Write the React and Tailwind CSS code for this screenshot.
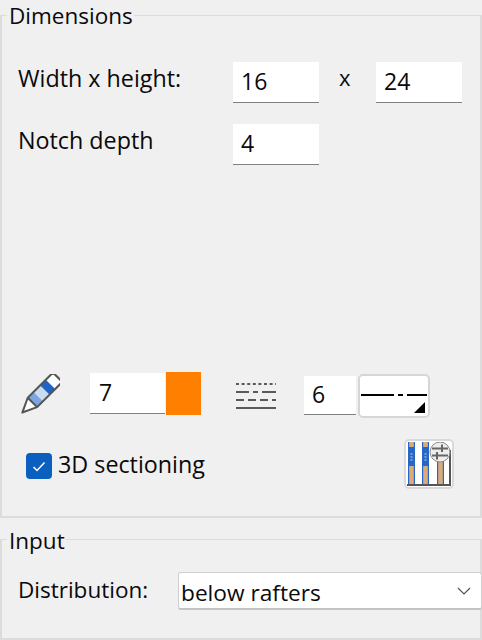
function Field({ value, className = "h-[41px]" }) {
  return (
    <div className={`bg-white border-b-[1.5px] border-[#808080] flex items-center ${className}`}>
      <span className="leading-none -mt-[2px] text-[23px]">{value}</span>
    </div>
  );
}

function Pencil() {
  return (
    <svg width="42" height="42" viewBox="0 0 42 42" fill="none">
      <g transform="translate(1 0) rotate(45 21 21) scale(1.02)">
        <rect x="14" y="-3" width="13" height="9" fill="#ffffff" />
        <rect x="14" y="6" width="13" height="8" fill="#1f63c8" />
        <rect x="14" y="14" width="13" height="9" fill="#c9dcf3" />
        <rect x="14" y="23" width="13" height="8" fill="#7ba6e0" />
        <path d="M14 31 L20.5 44 L27 31 Z" fill="#ffffff" />
        <path d="M14 -1 Q14 -4 17 -4 L24 -4 Q27 -4 27 -1 L27 31 L20.5 45 L14 31 Z M14 31 L27 31" stroke="#555555" strokeWidth="2" strokeLinejoin="round" />
      </g>
    </svg>
  );
}

function LineTypes() {
  return (
    <svg width="40" height="28" viewBox="0 0 40 28" fill="none" stroke="#5a5a5a" strokeWidth="2">
      <line x1="0" x2="40" y1="2" y2="2" strokeDasharray="3 2.6" />
      <path d="M0 10H13M17 10H22M26 10H40" />
      <line x1="0" x2="40" y1="18" y2="18" strokeDasharray="8 4" />
      <line x1="0" x2="40" y1="26" y2="26" />
    </svg>
  );
}

function RaftersIcon() {
  return (
    <svg width="44" height="44" viewBox="0 0 44 44" fill="none">
      {[1, 15, 30].map((x) => (
        <g key={x}>
          <rect x={x} y="0" width="7" height="42" fill="#2467c9" />
          <rect x={x + 1.2} y="0" width="4.6" height="42" fill="#dcab7a" />
        </g>
      ))}
      <rect x="1" y="5" width="7" height="19" fill="#2467c9" />
      <rect x="15" y="5" width="7" height="19" fill="#2467c9" />
      <path d="M3.5 12h2M3.5 15h2M3.5 18h2M17.5 12h2M17.5 15h2M17.5 18h2" stroke="#a9a9b5" strokeWidth="1.5" />
      <path d="M0 43H43V8" stroke="#555555" strokeWidth="2" />
      <circle cx="33" cy="10" r="10" fill="#ededed" stroke="#8a8a8a" strokeWidth="1" />
      <path d="M25 6.5H41M25 13.5H41M35 2.5V10M30 10V17.5" stroke="#666666" strokeWidth="2" />
    </svg>
  );
}

export default function App() {
  return (
    <div className="w-[482px] h-[640px] bg-[#f0f0f0] text-[#0a0a0a] text-[23.3px] overflow-hidden" style={{ fontFamily: '"Open Sans", "Noto Sans", sans-serif' }}>
      <fieldset className="h-[518px] border-2 border-[#dcdcdc] pl-[16px] pr-[18px] m-0 flex flex-col border-t-[1.5px]">
        <legend className="-ml-[11px] pl-[2px] pr-[1px] text-[22.5px] leading-[30px]"><span className="relative top-[1px]">Dimensions</span></legend>
        <div className="flex items-center mt-[32px] h-[41px]">
          <span className="w-[215px] -mt-[8px]">Width x height:</span>
          <Field value="16" className="h-[41px] w-[86px] pl-[8px]" />
          <span className="w-[57px] pl-[20px] -mt-[10px] text-[22px]">x</span>
          <Field value="24" className="h-[41px] w-[86px] pl-[8px]" />
        </div>
        <div className="flex items-center mt-[21px] h-[41px]">
          <span className="w-[215px] -mt-[9px]">Notch depth</span>
          <Field value="4" className="h-[41px] w-[86px] pl-[8px]" />
        </div>
        <div className="flex items-center mt-[206px] h-[45px]">
          <div className="w-[72px] ml-[0px] flex items-center mt-[3px]"><Pencil /></div>
          <Field value="7" className="h-[41px] w-[75px] pl-[9px]" />
          <div className="w-[35px] h-[43px] ml-[1px] bg-[#ff8000]" />
          <div className="ml-[35px] mt-[4px]"><LineTypes /></div>
          <Field value="6" className="h-[39px] w-[52px] pl-[8px] ml-[28px] mt-[4px]" />
          <div className="relative w-[72px] h-[44px] ml-[2px] mt-[4px] bg-white border-2 border-[#d6d6d6] rounded-[5px] flex items-center">
            <div className="h-[2px] w-full flex gap-[4px] px-[1px] -mt-[2px]">
              <div className="h-[2px] w-[33px] bg-black" />
              <div className="h-[2px] w-[5px] bg-black" />
              <div className="h-[2px] flex-1 bg-black" />
            </div>
            <svg className="absolute right-[3px] bottom-[3px]" width="11" height="11" viewBox="0 0 11 11"><path d="M11 0V11H0Z" fill="#000" /></svg>
          </div>
        </div>
        <div className="flex items-center justify-between mt-[23px] h-[50px] pr-[8px]">
          <div className="flex items-center gap-[6px] ml-[8px] mt-[4px]">
            <div className="w-[26px] h-[26px] rounded-[4px] bg-[#0a5fbf] flex items-center justify-center">
              <svg width="14" height="11" viewBox="0 0 14 11" fill="none"><path d="M1.5 6L5 9.5L12.5 1.5" stroke="#fff" strokeWidth="1.5" /></svg>
            </div>
            <span className="-mt-[4px]">3D sectioning</span>
          </div>
          <div className="w-[50px] h-[50px] bg-white border-2 border-[#d9d9d9] rounded-[5px] flex items-center justify-center">
            <RaftersIcon />
          </div>
        </div>
      </fieldset>
      <fieldset className="h-[116px] mt-[6px] border-2 border-[#dcdcdc] border-t-[1.5px] pl-[16px] m-0 flex flex-col">
        <legend className="-ml-[11px] pl-[2px] pr-[1px] text-[22.5px] leading-[30px]"><span className="relative top-[2px]">Input</span></legend>
        <div className="flex items-center mt-[18px] -mr-[2px]">
          <span className="w-[160px] -mt-[2px] text-[22.5px]">Distribution:</span>
          <div className="flex-1 h-[38px] bg-white border border-[#cfcfcf] border-b-2 border-b-[#c4c4c4] rounded-[3px] flex items-center justify-between pl-[2px] pr-[10px]">
            <span className="text-[22.7px] mt-[5px]">below rafters</span>
            <svg width="14" height="8" viewBox="0 0 14 8" fill="none"><path d="M1 1L7 7L13 1" stroke="#555" strokeWidth="1.2" /></svg>
          </div>
        </div>
      </fieldset>
    </div>
  );
}
